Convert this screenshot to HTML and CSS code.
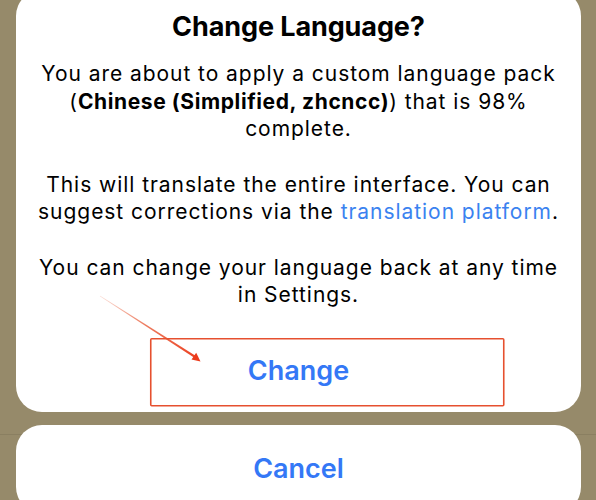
FILE: index.html
```html
<!DOCTYPE html>
<html lang="en">
<head>
<meta charset="utf-8">
<title>Change Language?</title>
<link rel="stylesheet" href="styles.css">
</head>
<body>
<div class="page">
  <div class="sheet">
    <section class="card alert">
      <h1 class="title">Change Language?</h1>
      <div class="message">
        <p>You are about to apply a custom language pack (<b>Chinese (Simplified, zhcncc)</b>) that is 98% complete.</p>
        <p>This will translate the entire interface. You can suggest corrections via the <a class="link" href="#">translation platform</a>.</p>
        <p>You can change your language back at any time in Settings.</p>
      </div>
      <button class="action">Change</button>
    </section>
    <section class="card cancel">
      <button class="action">Cancel</button>
    </section>
  </div>
  <svg class="annotation" width="596" height="500" viewBox="0 0 596 500" aria-hidden="true">
    <defs>
      <linearGradient id="ag" x1="100" y1="296" x2="200" y2="361" gradientUnits="userSpaceOnUse">
        <stop offset="0" stop-color="#e8603c" stop-opacity="0.2"/>
        <stop offset="0.45" stop-color="#e85a36" stop-opacity="0.8"/>
        <stop offset="1" stop-color="#ec3b1c"/>
      </linearGradient>
    </defs>
    <polygon points="99.8,296.3 100.2,295.7 196.3,356.3 195.1,358.3" fill="url(#ag)"/>
    <polygon points="200.5,361.5 191.5,359.6 196.2,352.7" fill="#ec3b1c"/>
    <rect x="150.75" y="338.75" width="353" height="67" fill="none" stroke="#e6502f" stroke-width="1.6" rx="1"/>
  </svg>
</div>
</body>
</html>
```
FILE: styles.css
```css
html, body {
  margin: 0;
  padding: 0;
}
body {
  background: #968a6a;
  font-family: Inter, "Noto Sans", "Liberation Sans", sans-serif;
  color: #000;
  overflow: hidden;
  width: 596px;
  height: 500px;
}
.page {
  position: relative;
  width: 596px;
  height: 500px;
  background: linear-gradient(to bottom, transparent 434px, #8a7f61 434px, #8a7f61 435px, transparent 435px);
}
.sheet {
  display: flex;
  flex-direction: column;
  gap: 12.6px;
  padding: 0 15px 0 16px;
}
.card {
  background: #fff;
  border-radius: 26px;
}
.alert {
  margin-top: -10px;
  padding-top: 20px;
  display: flex;
  flex-direction: column;
  align-items: center;
}
.title {
  margin: 0;
  font-size: 27px;
  line-height: 34px;
  font-weight: 700;
  letter-spacing: -0.1px;
  text-align: center;
}
.message {
  margin-top: 16.4px;
  width: 524px;
  text-align: center;
  font-size: 21px;
  line-height: 27.5px;
  letter-spacing: 0.95px;
}
.message p {
  margin: 0 0 28px;
}
.message p:last-child {
  margin-bottom: 0;
}
.message b {
  font-weight: 700;
  letter-spacing: 0.6px;
}
.link {
  color: #3a82f0;
  text-decoration: none;
}
.action {
  display: block;
  width: 100%;
  border: 0;
  background: transparent;
  font-family: inherit;
  font-size: 27px;
  font-weight: 600;
  color: #3478f6;
  cursor: pointer;
}
.alert .action {
  margin-top: 21px;
  height: 82.5px;
  padding: 0 0 2px;
}
.cancel .action {
  height: 88px;
  padding: 0 0 0;
}
.annotation {
  position: absolute;
  left: 0;
  top: 0;
  pointer-events: none;
}
```
